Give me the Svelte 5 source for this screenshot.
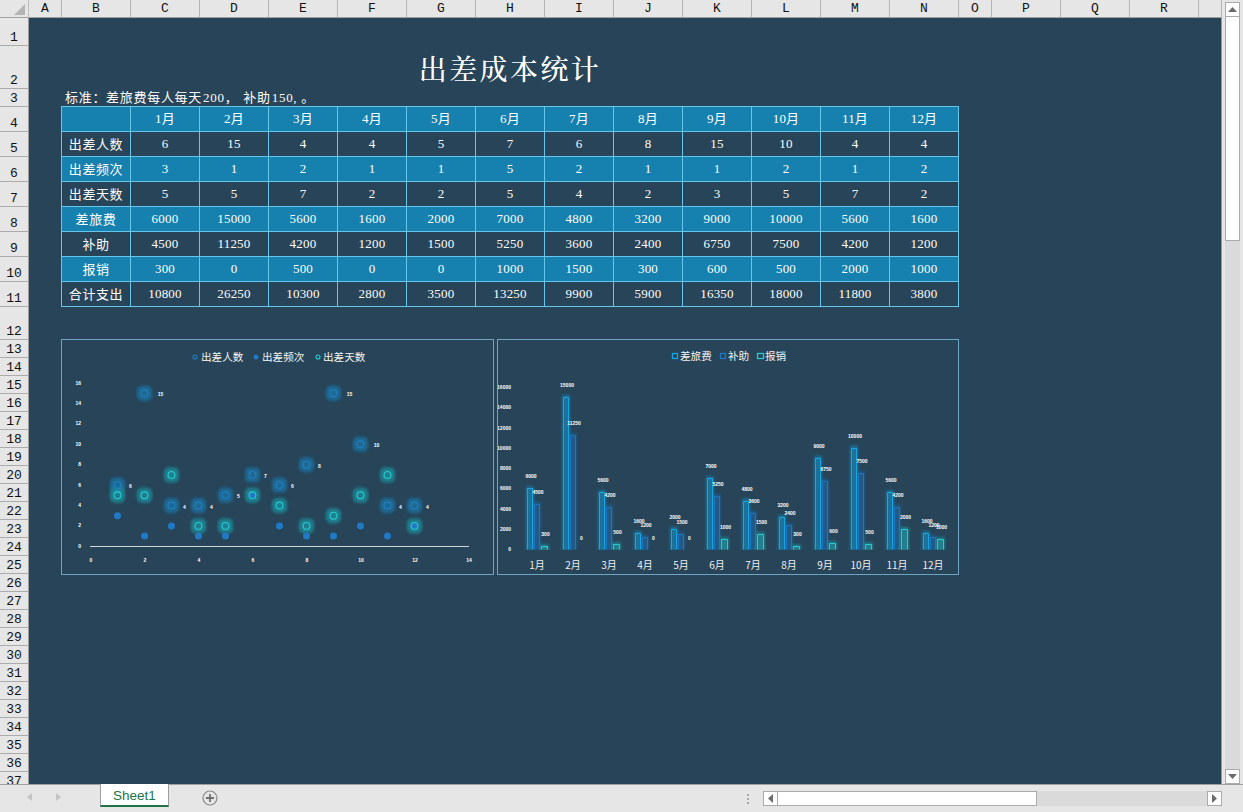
<script>
  const colLetters = [['A',33],...'BCDEFGHIJKLMN'.split('').map(c=>[c,69]),['O',33],['P',69],['Q',69],['R',69],['',23]];
  const rowHeights = [28,43,18,25,25,25,25,25,25,25,25,33];
  for (let i=13;i<=37;i++) rowHeights.push(18);
  const months = Array.from({length:12},(_,i)=>`${i+1}月`);
  const rows = [
    {k:'出差人数',v:[6,15,4,4,5,7,6,8,15,10,4,4],hi:false},
    {k:'出差频次',v:[3,1,2,1,1,5,2,1,1,2,1,2],hi:true},
    {k:'出差天数',v:[5,5,7,2,2,5,4,2,3,5,7,2],hi:false},
    {k:'差旅费',v:[6000,15000,5600,1600,2000,7000,4800,3200,9000,10000,5600,1600],hi:true},
    {k:'补助',v:[4500,11250,4200,1200,1500,5250,3600,2400,6750,7500,4200,1200],hi:false},
    {k:'报销',v:[300,0,500,0,0,1000,1500,300,600,500,2000,1000],hi:true},
    {k:'合计支出',v:[10800,26250,10300,2800,3500,13250,9900,5900,16350,18000,11800,3800],hi:false},
  ];
  const sx = i => 117.5+27*i;
  const sy = v => 546.3-10.2*v;
  const byVal = v => 387.7+ (16000-v)/2000*20.25;
  const barY = v => 549.5-v*0.01018;
  const series = [
    {cls:'b1',vals:rows[3].v,dx:0,w:5},
    {cls:'b2',vals:rows[4].v,dx:7,w:5},
    {cls:'b3',vals:rows[5].v,dx:14,w:6},
  ];
  const gx = i => 527.5+36*i;
</script>

<div class="app">
  <div class="work">
    <div class="grid">
      <div class="colhead">
        <div class="corner"><svg width="11" height="11" viewBox="0 0 11 11"><polygon points="11,0 11,11 0,11" fill="#b4b4b4"/></svg></div>
        {#each colLetters as [c,w]}
          <div class="col" style="width:{w}px">{c}</div>
        {/each}
      </div>
      <div class="body">
        <div class="rowhead">
          {#each rowHeights as h,i}
            <div class="rown" style="height:{h}px">{i+1}</div>
          {/each}
        </div>
        <div class="sheet">
          <h1 class="title">出差成本统计</h1>
          <div class="note">标准：差旅费每人每天<span class="num">200</span><span class="gap">，</span>补助<span class="num">150,</span><span class="stop">。</span></div>
          <table>
            <tbody>
              <tr class="hi">
                <th></th>
                {#each months as m}<td class="month">{m}</td>{/each}
              </tr>
              {#each rows as r}
                <tr class:hi={r.hi}>
                  <th>{r.k}</th>
                  {#each r.v as v}<td>{v}</td>{/each}
                </tr>
              {/each}
            </tbody>
          </table>
          <div class="charts">
            <svg class="chart c1" viewBox="62 340 431 234" width="431" height="234">
              <defs>
                <filter id="soft" x="-40%" y="-40%" width="180%" height="180%"><feGaussianBlur stdDeviation="1.4"/></filter>
                <filter id="soft2" x="-100%" y="-20%" width="300%" height="140%"><feGaussianBlur stdDeviation="1.8"/></filter>
                <clipPath id="base"><rect x="498" y="340" width="460" height="209.8"/></clipPath>
              </defs>
              <circle class="ring blue" cx="195" cy="357" r="2"/>
              <text class="leg" x="201" y="361">出差人数</text>
              <circle class="dot" cx="256" cy="357" r="2.5"/>
              <text class="leg" x="262" y="361">出差频次</text>
              <circle class="ring cyan" cx="318" cy="357" r="2"/>
              <text class="leg" x="323" y="361">出差天数</text>

              {#each [0,2,4,6,8,10,12,14,16] as t}
                <text class="tiny end" x="81" y={sy(t)+1.5}>{t}</text>
              {/each}
              {#each [0,2,4,6,8,10,12,14] as t}
                <text class="tiny mid" x={91+27*t} y="562">{t*1}</text>
              {/each}
              <line class="axis" x1="90" x2="469" y1="546.5" y2="546.5"/>

              {#each rows[0].v as v,i}
                <rect class="glow gb" x={sx(i)-7.5} y={sy(v)-7.5} width="15" height="15" rx="5" filter="url(#soft)"/>
              {/each}
              {#each rows[2].v as v,i}
                <rect class="glow gc" x={sx(i)-7.5} y={sy(v)-7.5} width="15" height="15" rx="5" filter="url(#soft)"/>
              {/each}
              {#each rows[0].v as v,i}
                <circle class="ring blue" cx={sx(i)} cy={sy(v)} r="3.4"/>
                <text class="tiny mid" x={sx(i)+(v>9?16:13)} y={sy(v)+3}>{v}</text>
              {/each}
              {#each rows[1].v as v,i}
                <circle class="dot" cx={sx(i)} cy={sy(v)} r="3.5"/>
              {/each}
              {#each rows[2].v as v,i}
                <circle class="ring cyan" cx={sx(i)} cy={sy(v)} r="3.4"/>
              {/each}
            </svg>

            <svg class="chart c2" viewBox="498 340 460 234" width="460" height="234">
              <rect class="sq s1" x="672.5" y="353.5" width="5" height="5"/>
              <text class="leg" x="680" y="360">差旅费</text>
              <rect class="sq s2" x="720.5" y="353.5" width="5" height="5"/>
              <text class="leg" x="728" y="360">补助</text>
              <rect class="sq s3" x="757.5" y="353.5" width="6" height="5"/>
              <text class="leg" x="765" y="360">报销</text>

              {#each [0,2000,4000,6000,8000,10000,12000,14000,16000] as t}
                <text class="tiny end" x="511" y={byVal(t)+1.5}>{t}</text>
              {/each}

              {#each series as s}
                {#each s.vals as v,i}
                  {#if v>0}
                    <g clip-path="url(#base)">
                      <rect class="barglow {s.cls}" x={gx(i)+s.dx-1.5} y={barY(v)-2} width={s.w+3} height={549.5-barY(v)+6} filter="url(#soft2)"/>
                    </g>
                  {/if}
                {/each}
              {/each}
              {#each series as s}
                {#each s.vals as v,i}
                  {#if v>0}
                    <path class="bar {s.cls}" d="M{gx(i)+s.dx} 549.5V{Math.round(barY(v))+.5}h{s.w}V549.5"/>
                  {/if}
                  <text class="tiny mid" x={gx(i)+s.dx+s.w/2+1} y={barY(v)-10}>{v}</text>
                {/each}
              {/each}
              {#each months as m,i}
                <text class="mon" x={537+36*i} y="569">{m}</text>
              {/each}
            </svg>
          </div>
        </div>
      </div>
    </div>
    <div class="vscroll">
      <div class="sbtn"><svg width="9" height="5" viewBox="0 0 9 5"><polygon points="4.5,0 9,5 0,5" fill="#6b6b6b"/></svg></div>
      <div class="vthumb"></div>
      <div class="track"></div>
      <div class="sbtn"><svg width="9" height="5" viewBox="0 0 9 5"><polygon points="0,0 9,0 4.5,5" fill="#6b6b6b"/></svg></div>
    </div>
  </div>
  <div class="bottom">
    <div class="nav">
      <svg width="5" height="8" viewBox="0 0 5 8"><polygon points="5,0 5,8 0,4" fill="#c4c4c4"/></svg>
      <svg width="5" height="8" viewBox="0 0 5 8"><polygon points="0,0 0,8 5,4" fill="#c4c4c4"/></svg>
    </div>
    <div class="tab">Sheet1</div>
    <svg class="plus" width="16" height="16" viewBox="0 0 16 16">
      <circle cx="8" cy="8" r="7" fill="none" stroke="#8a8a8a" stroke-width="1.2"/>
      <path d="M8 4v8M4 8h8" stroke="#6f6f6f" stroke-width="1.8"/>
    </svg>
    <div class="dots"><i></i><i></i><i></i></div>
    <div class="hscroll">
      <div class="sbtn h"><svg width="5" height="9" viewBox="0 0 5 9"><polygon points="5,0 5,9 0,4.5" fill="#6b6b6b"/></svg></div>
      <div class="hthumb"></div>
      <div class="track"></div>
      <div class="sbtn h"><svg width="5" height="9" viewBox="0 0 5 9"><polygon points="0,0 0,9 5,4.5" fill="#6b6b6b"/></svg></div>
    </div>
  </div>
</div>

<style>
  :global(body){margin:0;background:#e6e6e6}
  .app{width:1243px;height:812px;display:flex;flex-direction:column;overflow:hidden;background:#e6e6e6;font-family:"Liberation Mono","Noto Sans CJK SC",monospace}
  .work{flex:1;display:flex;min-height:0}
  .grid{width:1222px;display:flex;flex-direction:column;min-height:0}
  .colhead{display:flex;height:17px;flex:none;border-bottom:1px solid #a0a0a0;box-sizing:content-box;background:#e6e6e6}
  .corner{width:29px;flex:none;display:flex;align-items:flex-end;justify-content:flex-end;padding:0 3px 2px 0;box-sizing:border-box;border-right:1px solid #bdbdbd}
  .col{flex:none;box-sizing:border-box;border-right:1px solid #b4b4b4;text-align:center;font-size:13px;line-height:18px;color:#111}
  .body{flex:1;display:flex;min-height:0}
  .rowhead{width:29px;flex:none;overflow:hidden;background:#e6e6e6}
  .rown{box-sizing:border-box;border-bottom:1px solid #ababab;border-right:1px solid #9e9e9e;display:flex;align-items:flex-end;justify-content:center;font-size:13px;line-height:15px;color:#111}
  .sheet{flex:1;background:#274458;border-right:1px solid #8d9aa3;padding-left:32px;color:#fff;overflow:hidden;min-width:0}
  .title{margin:0;height:70px;width:898px;box-sizing:border-box;padding-top:31px;text-align:center;font:500 28px/38px "Noto Serif CJK SC","Noto Sans CJK SC",serif;letter-spacing:2.4px}
  .note{height:18px;font:13px/18px "Noto Sans CJK SC",sans-serif;letter-spacing:.7px;padding-left:4px;white-space:nowrap}
  .num{font:13px "Liberation Serif",serif;letter-spacing:.7px;margin-left:1px}
  .gap{margin-right:5px}
  .stop{margin-left:4px}
  table{border-collapse:collapse;table-layout:fixed;width:898px}
  th,td{border:1px solid #66c6ec;height:24px;padding:0;width:69px;text-align:center;font-weight:400;color:#fff;box-sizing:border-box}
  tr{height:25px}
  th{font:13px/24px "Noto Sans CJK SC",sans-serif;letter-spacing:.6px}
  td{font:13px/24px "Liberation Serif",serif;letter-spacing:.2px}
  td.month{font:13px/24px "Liberation Serif","Noto Sans CJK SC",serif}
  tr.hi th,tr.hi td{background:#1681ae}
  .charts{display:flex;gap:3px;margin-top:32px}
  .chart{display:block;flex:none;border:1px solid #6fa3c4;overflow:hidden}
  .leg{font:10.6px "Noto Sans CJK SC",sans-serif;fill:#f4f4f4}
  .mon{font:10px "Noto Sans CJK SC",sans-serif;fill:#f0f0f0;text-anchor:middle}
  .tiny{font:700 5px "Liberation Sans",sans-serif;fill:#fff}
  .end{text-anchor:end}
  .mid{text-anchor:middle}
  .axis{stroke:#cfd4d8;stroke-width:1}
  .glow.gb{fill:#1b6f9e;opacity:.85}
  .glow.gc{fill:#1f8f9c;opacity:.8}
  .ring{fill:none;stroke-width:1.1}
  .ring.blue{stroke:#1f7fc4}
  .ring.cyan{stroke:#24ccd2}
  .dot{fill:#2079c4}
  .sq{fill:none;stroke-width:1.3}
  .s1{stroke:#14a7e0}
  .s2{stroke:#1f79c0}
  .s3{stroke:#22cdd4}
  .barglow.b1{fill:#129ad2;opacity:.55}
  .barglow.b2{fill:#1c6fb5;opacity:.5}
  .barglow.b3{fill:#1fbcc2;opacity:.5}
  .bar{fill:none;stroke-width:1}
  .bar.b1{stroke:#14a7e3}
  .bar.b2{stroke:#1f74bd}
  .bar.b3{stroke:#22cdd4}
  .vscroll{width:21px;flex:none;box-sizing:border-box;padding:2px 3px 0;display:flex;flex-direction:column}
  .sbtn{width:15px;height:15px;flex:none;box-sizing:border-box;background:#fff;border:1px solid #ababab;display:flex;align-items:center;justify-content:center}
  .vthumb{height:224px;flex:none;box-sizing:border-box;background:#fff;border:1px solid #ababab;border-top:0}
  .track{flex:1;background:#dadada}
  .bottom{height:28px;flex:none;box-sizing:border-box;border-top:1px solid #a0a0a0;display:flex;align-items:flex-start;position:relative}
  .nav{width:100px;flex:none;box-sizing:border-box;padding:8px 0 0 27px;display:flex;gap:24px}
  .tab{width:69px;height:23px;flex:none;box-sizing:border-box;margin-top:-1px;background:#fff;border-left:1px solid #9e9e9e;border-right:1px solid #9e9e9e;border-bottom:2px solid #217346;color:#217346;text-align:center;font:13.5px/23px "Liberation Sans",sans-serif}
  .plus{margin:5px 0 0 33px;flex:none}
  .dots{margin:9px 0 0 527px;width:18px;flex:none;display:flex;flex-direction:column;gap:2px;align-items:flex-start;padding-left:2px;box-sizing:border-box}
  .dots i{display:block;width:2px;height:2px;background:#a8a8a8}
  .hscroll{margin-top:6px;width:459px;height:15px;flex:none;display:flex}
  .hthumb{width:259px;flex:none;box-sizing:border-box;background:#fff;border:1px solid #ababab;border-left:0}
  .sbtn.h{width:15px;height:15px}
</style>
